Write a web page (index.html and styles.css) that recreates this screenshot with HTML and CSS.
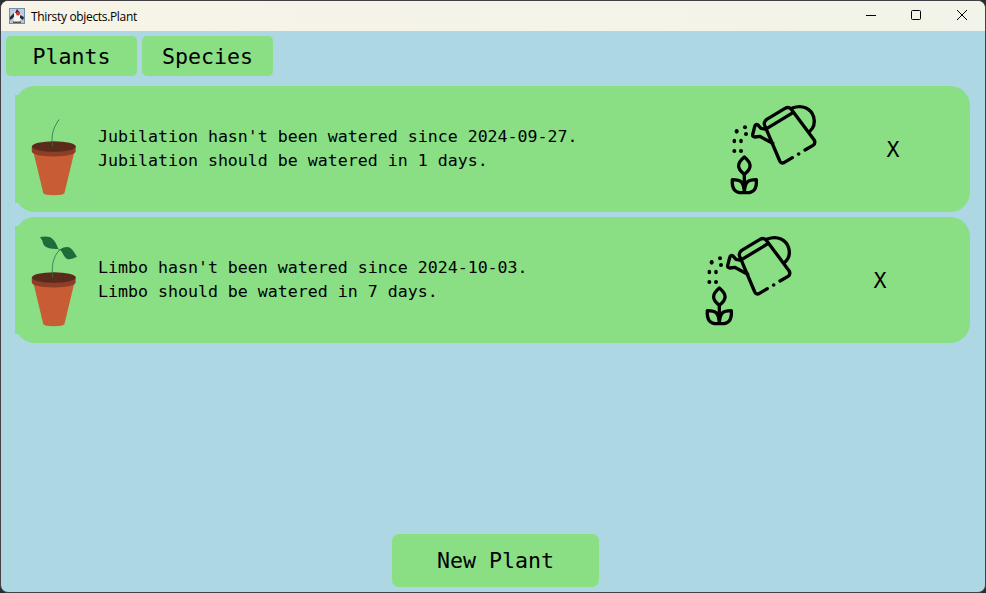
FILE: index.html
```html
<!DOCTYPE html>
<html lang="en">
<head>
<meta charset="utf-8">
<title>Thirsty objects.Plant</title>
<link rel="stylesheet" href="styles.css">
</head>
<body>
<svg class="defs" aria-hidden="true">
  <symbol id="pot" viewBox="45 45 249 324">
    <path d="M99 212 L130 341 Q133 347 162 347 Q190 347 194 341 L225 212Z" fill="#c75c35"/>
    <path d="M95 199 V213 Q97 228 162 229 Q226 228 228 213 V199Z" fill="#8c3f26"/>
    <ellipse cx="162" cy="199" rx="66.500" ry="16" fill="#5a2a1b"/>
  </symbol>
  <symbol id="can" viewBox="0 0 330 330">
    <g fill="none" stroke="#000" stroke-width="10" stroke-linecap="round" stroke-linejoin="round">
      <path d="M217 188 L192 203 Q182 207 178 195 L134 91 Q130 80 140 73 L195 40 Q207 33 215 44 L282 134 Q288 145 279 151 L255 165"/>
      <path d="M141 100 L219 53"/>
      <path d="M217 39 C248 27 274 42 281 66 C286 84 280 100 268 110"/>
      <path d="M139 103 L123 100 L113 89 Q107 86 104 95 L98 119 Q97 126 105 126 L119 124 L158 145"/>
      <path d="M73 186 C50 205 50 220 73 238 C96 220 96 205 73 186Z"/>
      <path d="M73 240 V291 M73 291 C75 260 83 254 109 254 C111 282 101 293 80 293 H66 C45 293 35 282 37 254 C63 254 71 260 73 291"/>
    </g>
    <g><circle cx="236" cy="177" r="5.500"/><circle cx="75" cy="97" r="6"/><ellipse cx="50" cy="109" rx="6" ry="7"/><circle cx="78" cy="117" r="6"/><ellipse cx="43" cy="138" rx="5.500" ry="7"/><ellipse cx="63" cy="138" rx="5.500" ry="7"/><circle cx="43" cy="168" r="6"/><circle cx="63" cy="168" r="6"/></g>
  </symbol>
</svg>
<div class="window">
  <header class="titlebar">
    <svg class="app-icon" viewBox="0 0 16 16">
      <rect width="16" height="16" fill="#6f8fad"/>
      <rect x="1" y="1" width="14" height="9" fill="#bccdde"/>
      <rect x="1" y="11" width="14" height="4" fill="#b9c4ce"/>
      <path d="M7.500 2 L11 5 12.500 10 10 14 H5 L4 9 5 5Z" fill="#f4f5f5"/>
      <path d="M8 1 L11 5 H6Z M1 9 L5 5 5 9 1 12Z M11 7 L15 9 14 12 11 10Z" fill="#25282d"/>
      <path d="M4 13.500 H12 V15 H4Z" fill="#555"/>
      <circle cx="9" cy="5.500" r="2" fill="#d92e32"/>
    </svg>
    <span class="title">Thirsty objects.Plant</span>
    <svg class="control" viewBox="0 0 46 30"><path d="M20 14.500 H30"/></svg>
    <svg class="control" viewBox="0 0 46 30"><rect x="19.500" y="9.500" width="9" height="9" rx="1"/></svg>
    <svg class="control" viewBox="0 0 46 30"><path d="M19 9 L29 19 M29 9 L19 19"/></svg>
  </header>
  <nav class="tabs">
    <button class="button tab">Plants</button>
    <button class="button tab">Species</button>
  </nav>
  <main class="plants">
    <article class="card">
      <svg class="plant" viewBox="44 43 249 324">
        <use href="#pot" x="45" y="45" width="249" height="324"/>
        <path d="M158 199 C154 168 157 146 178 117" fill="none" stroke="#267747" stroke-width="2.500"/>
      </svg>
      <p class="status">Jubilation hasn't been watered since 2024-09-27.<br>Jubilation should be watered in 1 days.</p>
      <svg class="water water-first"><use href="#can"/></svg>
      <button class="remove remove-first">X</button>
    </article>
    <article class="card">
      <svg class="plant" viewBox="44 43 249 324">
        <use href="#pot" x="45" y="45" width="249" height="324"/>
        <path d="M158 199 C155 163 159 135 181 114 M173 111 L181 116" fill="none" stroke="#267747" stroke-width="2.500"/>
        <path d="M120 76 Q148 71 157 81 Q169 91 175 112 Q145 113 134 103 Q129 98 127 87Z M180 114 Q201 101 214 111 Q220 115 232 136 Q211 148 200 141 Q194 137 186 121Z" fill="#1d6c3a"/>
      </svg>
      <p class="status">Limbo hasn't been watered since 2024-10-03.<br>Limbo should be watered in 7 days.</p>
      <svg class="water water-second"><use href="#can"/></svg>
      <button class="remove remove-second">X</button>
    </article>
  </main>
  <footer class="footer"><button class="button new-plant">New Plant</button></footer>
</div>
</body>
</html>
```
FILE: styles.css
```css
* { box-sizing: border-box; }
body { margin: 0; background: #2b2a30; }
.defs { display: block; width: 0; height: 0; }
.window {
  display: flex;
  flex-direction: column;
  width: 986px;
  height: 593px;
  border: 1px solid #424045;
  border-radius: 8px;
  overflow: hidden;
  background: #acd7e3;
  font-family: "DejaVu Sans Mono", monospace;
  color: #000;
}
.titlebar {
  display: flex;
  align-items: center;
  height: 30px;
  padding: 0 1px 0 8px;
  background: linear-gradient(90deg, #f7f3e7, #f2f4e9);
}
.app-icon { width: 16px; height: 16px; margin-top: -1px; }
.title {
  flex: 1;
  margin-left: 6px;
  font: 12px "Open Sans", sans-serif;
  letter-spacing: -0.33px;
}
.control { width: 46px; height: 30px; fill: none; stroke: #000; stroke-width: 1; }
.tabs { display: flex; gap: 5px; padding: 5px 5px 10px; }
.button {
  padding: 0;
  border: 0;
  border-radius: 5px;
  background: #8ade84;
  color: #000;
  font: 21.600px "DejaVu Sans Mono", monospace;
}
.tab { width: 131px; height: 40px; }
.plants { display: flex; flex-direction: column; gap: 5px; padding: 0 15px 0 14px; }
.card {
  display: flex;
  align-items: center;
  height: 126px;
  border-radius: 20px;
  background: #8ade84;
}
.plant { width: 83px; height: 108px; background: #8ade84; border: solid #8fdc8b; border-width: 0 1px 1px 0; }
.status {
  flex: 1;
  margin: 0;
  font-size: 16.600px;
  line-height: 24px;
}
.water { width: 110px; height: 110px; margin-top: 2px; }
.water-first { margin-right: 48px; }
.water-second { margin-right: 60px; }
.remove {
  width: 30px;
  height: 40px;
  padding: 0;
  border: 0;
  background: none;
  color: #000;
  font: 21.600px "DejaVu Sans Mono", monospace;
}
.remove-first { margin-right: 62px; }
.remove-second { margin-right: 75px; }
.footer { display: flex; justify-content: center; margin-top: auto; padding: 0 0 5px 5px; }
.new-plant { width: 207px; height: 53px; border-radius: 7px; }
```
